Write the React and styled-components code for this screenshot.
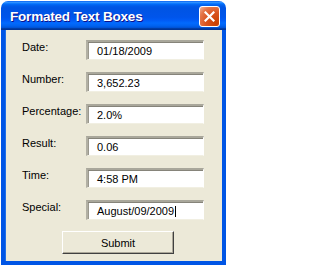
import styled, { createGlobalStyle } from 'styled-components'

const fields = [
    { label: 'Date:', value: '01/18/2009' },
    { label: 'Number:', value: '3,652.23' },
    { label: 'Percentage:', value: '2.0%' },
    { label: 'Result:', value: '0.06' },
    { label: 'Time:', value: '4:58 PM' },
    { label: 'Special:', value: 'August/09/2009', focused: true },
]

const App = () => {
    return (
        <>
            <GlobalStyle />
            <Window>
                <TitleBar>
                    <Title>Formated Text Boxes</Title>
                    <CloseButton aria-label='Close'>
                        <svg width='11' height='11' viewBox='0 0 11 11'>
                            <path d='M1.5 1.5 L9.5 9.5 M9.5 1.5 L1.5 9.5' stroke='#fff' strokeWidth='2.2' strokeLinecap='square' />
                        </svg>
                    </CloseButton>
                </TitleBar>
                <Body>
                    <Fields>
                        {fields.map(({ label, value, focused }) => (
                            <Row key={label}>
                                <Label>{label}</Label>
                                <TextBox>
                                    {value}
                                    {focused && <Caret />}
                                </TextBox>
                            </Row>
                        ))}
                    </Fields>
                    <Button>Submit</Button>
                </Body>
            </Window>
        </>
    )
}

const GlobalStyle = createGlobalStyle`
    html, body {
        margin: 0;
        background: #fff;
    }
    body {
        font-family: 'Liberation Sans', Arial, sans-serif;
    }
`

const Window = styled.div`
    margin: 1px 0 0 1px;
    width: 225px;
    height: 264px;
    display: flex;
    flex-direction: column;
    border-radius: 7px 7px 0 0;
    overflow: hidden;
`

const TitleBar = styled.div`
    height: 29px;
    flex: none;
    display: flex;
    align-items: flex-start;
    justify-content: space-between;
    padding: 0 6px 0 9px;
    box-sizing: border-box;
    background: linear-gradient(
        to bottom,
        #0058ee 0%,
        #3593ff 4%,
        #288eff 6%,
        #127dff 8%,
        #036ffc 10%,
        #0262ee 14%,
        #0057e5 20%,
        #0054e3 24%,
        #0055eb 56%,
        #005bf5 66%,
        #026afe 76%,
        #0062ef 86%,
        #0052d6 92%,
        #0040ab 94%,
        #003092 100%
    );
`

const Title = styled.span`
    margin-top: 8px;
    font-size: 13.5px;
    line-height: 16px;
    font-weight: 700;
    letter-spacing: -0.2px;
    color: #fff;
    text-shadow: 1px 1px #0f1089;
`

const CloseButton = styled.div`
    margin-top: 5px;
    width: 21px;
    height: 21px;
    box-sizing: border-box;
    border: 1px solid #fff;
    border-radius: 3px;
    display: flex;
    align-items: center;
    justify-content: center;
    background: radial-gradient(circle at 85% 85%, #c94000 0%, #d9531f 45%, #e4764a 75%, #f3b49a 100%);
`

const Body = styled.div`
    flex: 1;
    background: #ece9d8;
    border: 4px solid #0055e5;
    border-top: none;
    box-shadow: inset 1px 0 #1f6fe8;
    padding: 10px 0 0 17px;
    display: flex;
    flex-direction: column;
    align-items: flex-start;
`

const Fields = styled.div`
    display: flex;
    flex-direction: column;
    gap: 12px;
`

const Row = styled.div`
    display: flex;
    align-items: flex-start;
`

const Label = styled.span`
    width: 64px;
    font-size: 11px;
    line-height: 14px;
    color: #000;
`

const TextBox = styled.div`
    width: 118px;
    height: 20px;
    box-sizing: border-box;
    padding: 1px 0 0 9px;
    background: #fff;
    border-style: solid;
    border-width: 2px 1px 1px 2px;
    border-color: #a9a79b #ffffff #f1efe2 #b2b0a4;
    box-shadow: inset 0 1px #86847a, inset 1px 0 #9a988d;
    font-size: 11px;
    line-height: 16px;
    color: #000;
    white-space: nowrap;
`

const Caret = styled.span`
    display: inline-block;
    width: 1px;
    height: 11px;
    margin-left: 1px;
    background: #000;
    vertical-align: -2px;
`

const Button = styled.div`
    margin: 11px 0 0 40px;
    width: 112px;
    height: 23px;
    box-sizing: border-box;
    border: 1px solid;
    border-color: #ffffff #404040 #404040 #ffffff;
    box-shadow: inset -1px -1px #aca899;
    background: #ece9d8;
    display: flex;
    align-items: center;
    justify-content: center;
    font-size: 11px;
    color: #000;
`

export default App
